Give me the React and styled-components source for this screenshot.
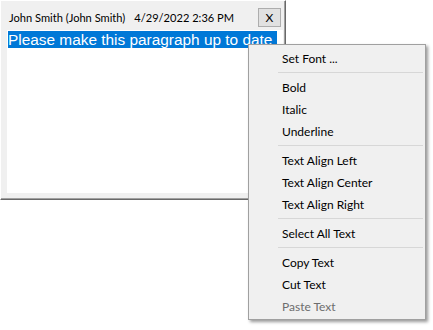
import React from 'react';
import styled, { createGlobalStyle } from 'styled-components';

const GlobalStyle = createGlobalStyle`
    body {
        margin: 0;
        background: #ffffff;
        font-family: 'Lato', 'Liberation Sans', sans-serif;
    }
`;

const Page = styled.div`
    position: relative;
    width: 433px;
    height: 330px;
`;

const Dialog = styled.div`
    box-sizing: border-box;
    width: 286px;
    height: 200px;
    display: flex;
    flex-direction: column;
    padding: 5px 4px 6px 6px;
    background: #f0f0f0;
    border: 1px solid;
    border-color: #ffffff #696969 #696969 #ffffff;
    box-shadow: inset -1px -1px 0 #a0a0a0;
`;

const Header = styled.div`
    height: 23px;
    display: flex;
    align-items: center;
    margin-bottom: 1px;
    font-size: 11.1px;
    color: #000;
`;

const Author = styled.span`
    margin-left: 2px;
`;

const Stamp = styled.span`
    margin-left: 9px;
`;

const CloseButton = styled.button`
    margin-left: auto;
    width: 23px;
    height: 19px;
    padding: 0;
    border: 1px solid #adadad;
    background: #e1e1e1;
    font-family: 'Lato', 'Liberation Sans', sans-serif;
    font-size: 12px;
    color: #000;
`;

const Editor = styled.div`
    flex: 1;
    background: #ffffff;
    margin-right: -2px;
    padding: 1px 0 0 1px;
    font-family: 'Liberation Sans', Arial, sans-serif;
    font-size: 15.4px;
    line-height: 18px;
`;

const Selected = styled.span`
    background: #0078d7;
    color: #ffffff;
    padding-right: 5px;
`;

const Menu = styled.div`
    position: absolute;
    left: 248px;
    top: 44px;
    width: 178px;
    box-sizing: border-box;
    padding: 2px;
    background: #f0f0f0;
    border: 1px solid #a0a0a0;
    box-shadow: 2px 2px 3px rgba(0, 0, 0, 0.4);
    font-size: 12px;
`;

const Item = styled.div`
    height: 22px;
    display: flex;
    align-items: center;
    padding-left: 31px;
    color: ${p => (p.disabled ? '#6d6d6d' : '#000')};
`;

const Separator = styled.div`
    height: 7px;
    display: flex;
    align-items: center;
    margin-left: 27px;
    &::after {
        content: '';
        flex: 1;
        height: 1px;
        background: #d7d7d7;
    }
`;

const groups = [
    ['Set Font ...'],
    ['Bold', 'Italic', 'Underline'],
    ['Text Align Left', 'Text Align Center', 'Text Align Right'],
    ['Select All Text'],
    ['Copy Text', 'Cut Text', 'Paste Text'],
];

export default function App() {
    return (
        <>
            <GlobalStyle />
            <Page>
                <Dialog>
                    <Header>
                        <Author>John Smith (John Smith)</Author>
                        <Stamp>4/29/2022 2:36 PM</Stamp>
                        <CloseButton>X</CloseButton>
                    </Header>
                    <Editor>
                        <Selected>Please make this paragraph up to date</Selected>
                    </Editor>
                </Dialog>

                <Menu>
                    {groups.map((group, i) => (
                        <React.Fragment key={i}>
                            {i > 0 && <Separator />}
                            {group.map(label => (
                                <Item key={label} disabled={label === 'Paste Text'}>
                                    {label}
                                </Item>
                            ))}
                        </React.Fragment>
                    ))}
                </Menu>
            </Page>
        </>
    );
}
